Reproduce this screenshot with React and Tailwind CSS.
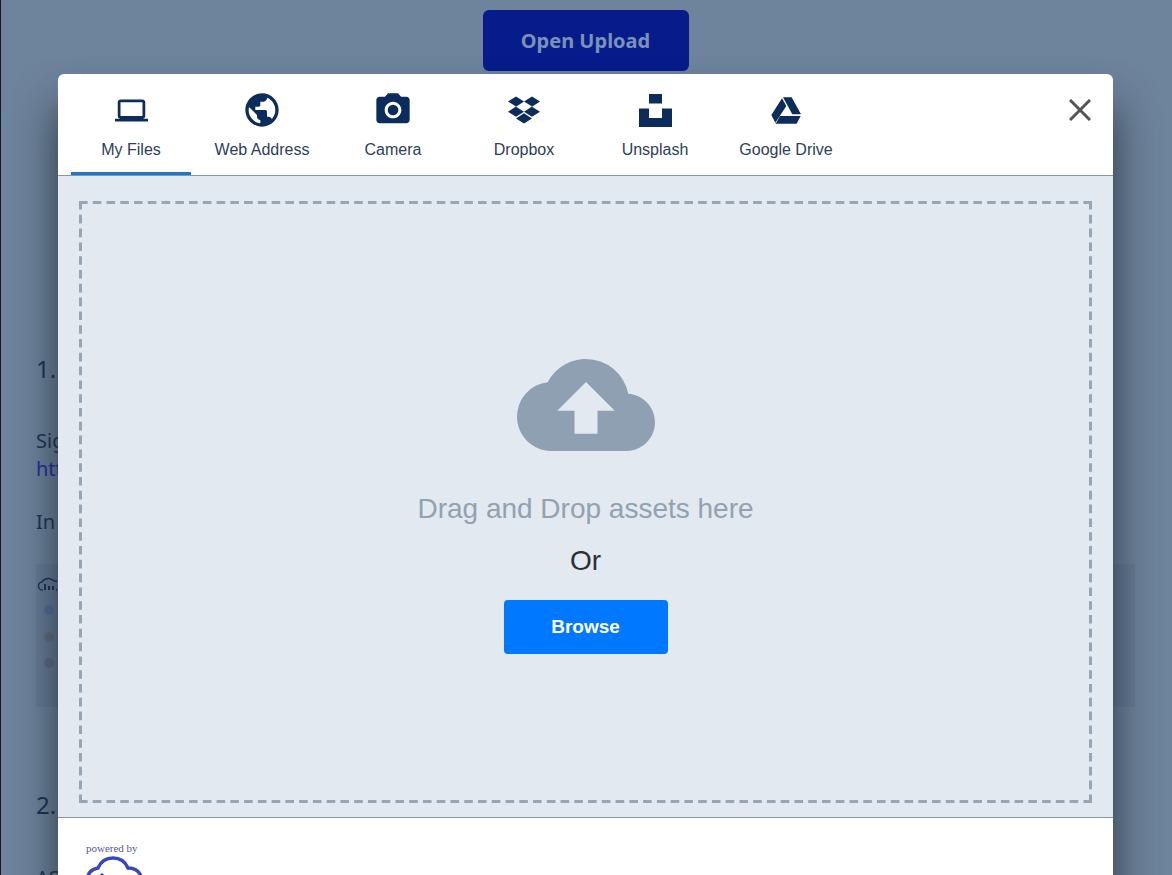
import { MdPublic, MdCameraAlt, MdLaptop, MdCloudUpload } from "react-icons/md";
import { FaDropbox } from "react-icons/fa";

function UnsplashIcon() {
  return (
    <svg viewBox="0 0 33 33" className="size-[33px] fill-current" aria-hidden="true">
      <path d="M10 0h13v9.5H10zM23 14.5h10V33H0V14.5h10V24h13z" />
    </svg>
  );
}

function DriveIcon() {
  return (
    <svg viewBox="0 0 90 81" className="h-[27px] w-[30px] fill-current" aria-hidden="true">
      <path d="M33 4L1 54l12 23 33-50zM36 1h26l28 51H64zM27 57h62L77 80H14z" />
    </svg>
  );
}

const sources = [
  { label: "My Files", icon: <MdLaptop className="size-[33px]" /> },
  { label: "Web Address", icon: <MdPublic className="size-10" /> },
  { label: "Camera", icon: <MdCameraAlt className="size-10" /> },
  { label: "Dropbox", icon: <FaDropbox className="size-8" /> },
  { label: "Unsplash", icon: <UnsplashIcon /> },
  { label: "Google Drive", icon: <DriveIcon /> },
];

function DashedFrame() {
  return (
    <svg
      className="pointer-events-none absolute inset-0 size-full overflow-hidden stroke-[#97a6b5]"
      strokeWidth="6"
      aria-hidden="true"
    >
      <line x1="0" y1="0" x2="100%" y2="0" pathLength="589" strokeDasharray="5 3" />
      <line x1="0" y1="100%" x2="100%" y2="100%" pathLength="589" strokeDasharray="5 3" />
      <line x1="0" y1="0" x2="0" y2="100%" pathLength="349" strokeDasharray="5 3" />
      <line x1="100%" y1="0" x2="100%" y2="100%" pathLength="349" strokeDasharray="5 3" />
    </svg>
  );
}

function Backdrop() {
  return (
    <main className="min-h-screen border-l border-[#15181d] pl-[35px] font-['Noto_Sans',sans-serif] text-[#1b3358]">
      <div className="flex justify-center pt-[10px] pr-[37px]">
        <button
          type="button"
          className="h-[61px] w-[206px] rounded-md bg-[#071b8b] font-['Noto_Sans',sans-serif] text-xl font-bold text-[#7a92b8]"
        >
          Open Upload
        </button>
      </div>
      <h2 className="mt-[282px] text-2xl leading-8">1.</h2>
      <p className="mt-[42px] text-xl leading-7">
        Sig
        <br />
        <a href="#signup" className="text-[#1c2fa0]">
          htt
        </a>
      </p>
      <p className="mt-[25px] text-xl leading-7">In</p>
      <div className="mt-7 mr-[37px] flex h-[143px] flex-col bg-[#677c97] pl-px">
        <svg viewBox="0 0 20 130" className="mt-2 h-[130px] w-[20px]" fill="none" aria-hidden="true">
          <path d="M6 18a4 4 0 0 1-1-8 7 6 0 0 1 12-1 4 4 0 0 1 2 9" stroke="#1b3358" strokeWidth="1.5" />
          <path d="M8 12v6M12 14v4M16 14v4" stroke="#1b3358" strokeWidth="2" />
          <circle cx="12" cy="38" r="5" fill="#4f69a3" opacity="0.7" />
          <circle cx="12" cy="65" r="5" fill="#61686f" opacity="0.6" />
          <circle cx="12" cy="91" r="5" fill="#5f6385" opacity="0.7" />
        </svg>
      </div>
      <h2 className="mt-[82px] text-2xl leading-8">2.</h2>
      <p className="mt-[43px] text-xl leading-7">AS</p>
    </main>
  );
}

function UploadDialog() {
  return (
    <section
      role="dialog"
      aria-label="Upload"
      className="flex flex-col rounded-t-md bg-white font-['Liberation_Sans',sans-serif] shadow-[0_32px_44px_rgba(20,30,35,0.75)]"
    >
      <header className="flex h-[102px] items-start justify-between border-b border-[#8497a8] pr-[17px] pl-[13px]">
        <nav className="flex h-full gap-[11px]">
          {sources.map(({ label, icon }, i) => (
            <button
              key={label}
              type="button"
              className={
                "flex w-[120px] flex-col items-center border-b-[3px] pt-4 " +
                (i === 0 ? "border-[#1f76cf]" : "border-transparent")
              }
            >
              <span className="flex h-10 items-center text-[#0c2d5b]">{icon}</span>
              <span className="mt-2 text-base leading-6 whitespace-nowrap text-[#2c405c]">{label}</span>
            </button>
          ))}
        </nav>
        <button type="button" aria-label="Close" className="mt-5 flex size-8 items-center justify-center">
          <svg viewBox="0 0 22 22" className="size-[22px] stroke-[#555] stroke-[3]" aria-hidden="true">
            <path d="M1 1l20 20M21 1L1 21" />
          </svg>
        </button>
      </header>
      <div className="border-b border-[#8497a8] bg-[#e2e9f0] px-[21px] pt-[25px] pb-[14px]">
        <div className="relative flex h-[602px] flex-col items-center pt-[135px]">
          <DashedFrame />
          <MdCloudUpload className="size-[138px] text-[#8fa0b3]" />
          <p className="mt-[17px] text-[28px] leading-9 text-[#93a1b0]">Drag and Drop assets here</p>
          <p className="mt-4 text-[28px] leading-9 text-[#2b2e33]">Or</p>
          <button
            type="button"
            className="mt-[21px] h-[54px] w-[164px] rounded bg-[#0078ff] text-[19px] font-bold text-white"
          >
            Browse
          </button>
        </div>
      </div>
      <footer className="h-[90px] px-7 pt-[22px]">
        <p className="font-['Liberation_Serif',serif] text-[11px] leading-4 text-[#5a5796]">powered by</p>
        <svg viewBox="0 0 60 40" className="h-10 w-[60px]" fill="none" aria-hidden="true">
          <path d="M10 34C3 32 0 26 2 20c1-4 5-7 10-8C15 5 21 2 27 2s12 3 15 10c6 0 11 3 13 8 2 6-1 12-8 14" stroke="#3a46c0" strokeWidth="3.5" />
          <path d="M9 23l7-6 7 6h-4v12h-6V23z" fill="#3448c5" />
        </svg>
      </footer>
    </section>
  );
}

export default function App() {
  return (
    <div className="relative h-screen overflow-hidden bg-[#6e839c]">
      <Backdrop />
      <div className="absolute inset-0 overflow-hidden pt-[74px] pr-[59px] pl-[58px]">
        <UploadDialog />
      </div>
    </div>
  );
}
